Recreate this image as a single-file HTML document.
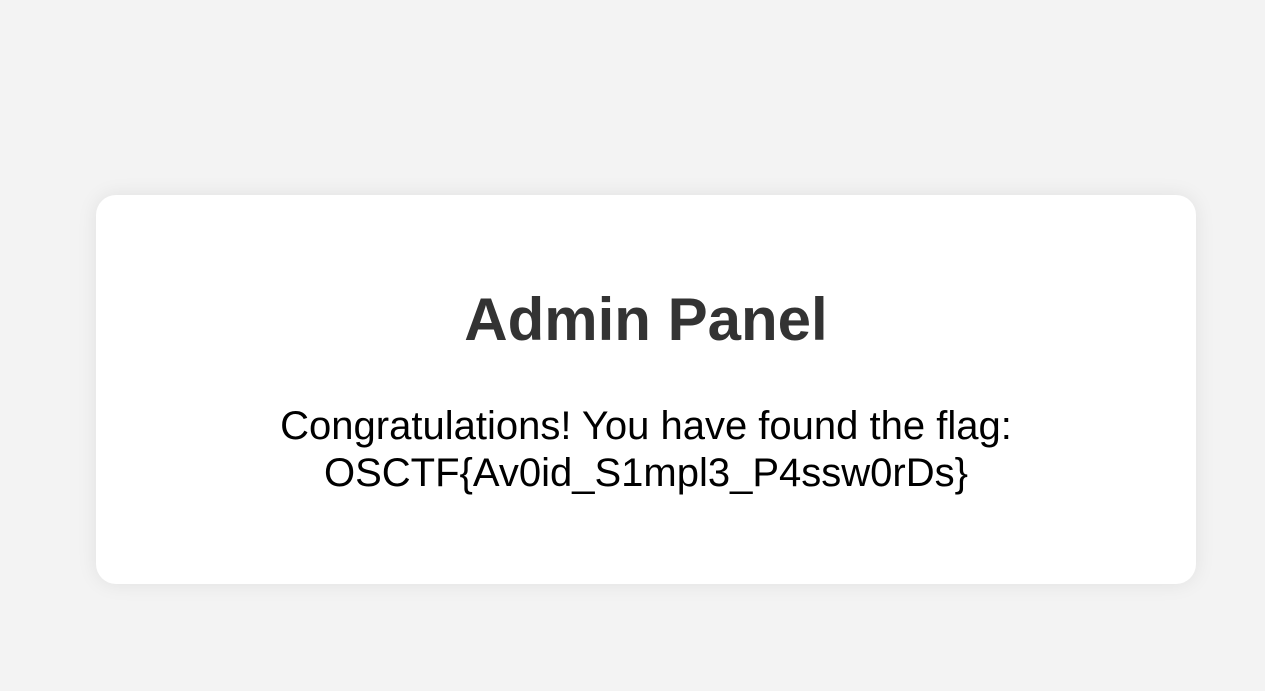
<!DOCTYPE html>
<html><head><style>
html,body{margin:0;padding:0;}
body{width:1265px;height:691px;background:#f3f3f3;font-family:"Liberation Sans",Arial,sans-serif;position:relative;overflow:hidden;}
.card{position:absolute;left:96px;top:195px;width:1100px;height:389px;background:#fff;border-radius:20px;box-shadow:0 0 20px rgba(0,0,0,0.08);text-align:center;}
h1{margin:0;position:absolute;top:289px;left:0;width:1292px;text-align:center;font-size:60px;font-weight:bold;color:#333;line-height:62px;}
p{margin:0;position:absolute;top:403px;left:0;width:1292px;text-align:center;font-size:40px;line-height:47px;color:#000;}
</style></head><body>
<div class="card"></div>
<h1>Admin Panel</h1>
<p>Congratulations! You have found the flag:<br>OSCTF{Av0id_S1mpl3_P4ssw0rDs}</p>
</body></html>
